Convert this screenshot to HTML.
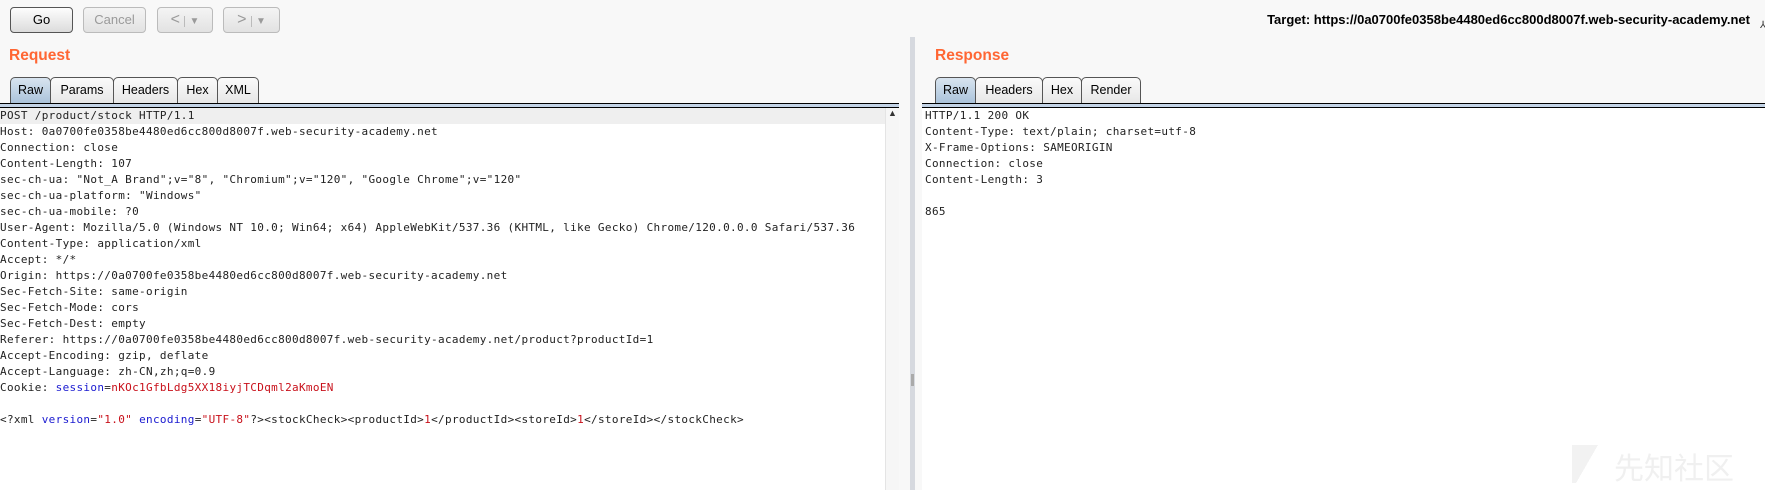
<!DOCTYPE html>
<html><head><meta charset="utf-8"><style>
*{margin:0;padding:0;box-sizing:border-box}
body{width:1765px;height:490px;background:#f8f8f8;position:relative;overflow:hidden;font-family:"Liberation Sans",Arial,sans-serif}
.btn{position:absolute;top:7px;height:26px;border:1px solid #bbb;border-radius:4px;background:linear-gradient(#f4f4f4,#e2e2e2);font-size:13px;color:#9a9a9a;text-align:center;line-height:24px}
.go{border-color:#555;color:#000;background:linear-gradient(#fdfdfd,#dcdcdc)}
.lbl{position:absolute;top:47px;font-size:15.5px;font-weight:bold;color:#ff6633}
.tab{position:absolute;top:77px;height:27px;border:1px solid #555;border-bottom:none;border-radius:5px 5px 0 0;background:linear-gradient(#fafafa,#e6e6e6);font-size:12.5px;line-height:25px;text-align:center;color:#000}
.tab.sel{background:linear-gradient(#d8e4ef,#a9c2da)}
.bar{position:absolute;top:103px;height:5px;border-top:1px solid #000;border-bottom:1px solid #000;background:#c3d3e6}
.txt{position:absolute;top:108px;background:#fff;font-family:"DejaVu Sans Mono","Liberation Mono",monospace;font-size:11px;letter-spacing:0.33px;line-height:16px;color:#222;white-space:pre}
.hl{background:#efefef}
.b{color:#1a1ad0}.r{color:#c8101a}
</style></head><body>
<div class="btn go" style="left:10px;width:63px">Go</div>
<div class="btn" style="left:83px;width:63px">Cancel</div>
<div class="btn" style="left:157px;width:56px;font-size:16px">&lt; <span style="font-size:10px;border-left:1px solid #bbb;padding-left:4px">▼</span></div>
<div class="btn" style="left:223px;width:57px;font-size:16px">&gt; <span style="font-size:10px;border-left:1px solid #bbb;padding-left:4px">▼</span></div>
<div style="position:absolute;right:15px;top:12px;font-size:13px;font-weight:bold;color:#000">Target: https://0a0700fe0358be4480ed6cc800d8007f.web-security-academy.net</div>
<div style="position:absolute;left:1760px;top:20px;font-size:10px;color:#333">⅄</div>

<div class="lbl" style="left:9px">Request</div>
<div class="tab sel" style="left:10px;width:41px">Raw</div>
<div class="tab" style="left:50px;width:64px">Params</div>
<div class="tab" style="left:113px;width:65px">Headers</div>
<div class="tab" style="left:177px;width:41px">Hex</div>
<div class="tab" style="left:217px;width:42px">XML</div>
<div class="bar" style="left:0;width:899px"></div>
<div class="txt" style="left:0;width:885px;height:382px;overflow:hidden"><div class="hl">POST /product/stock HTTP/1.1</div>Host: 0a0700fe0358be4480ed6cc800d8007f.web-security-academy.net
Connection: close
Content-Length: 107
sec-ch-ua: "Not_A Brand";v="8", "Chromium";v="120", "Google Chrome";v="120"
sec-ch-ua-platform: "Windows"
sec-ch-ua-mobile: ?0
User-Agent: Mozilla/5.0 (Windows NT 10.0; Win64; x64) AppleWebKit/537.36 (KHTML, like Gecko) Chrome/120.0.0.0 Safari/537.36
Content-Type: application/xml
Accept: */*
Origin: https://0a0700fe0358be4480ed6cc800d8007f.web-security-academy.net
Sec-Fetch-Site: same-origin
Sec-Fetch-Mode: cors
Sec-Fetch-Dest: empty
Referer: https://0a0700fe0358be4480ed6cc800d8007f.web-security-academy.net/product?productId=1
Accept-Encoding: gzip, deflate
Accept-Language: zh-CN,zh;q=0.9
Cookie: <span class="b">session</span>=<span class="r">nKOc1GfbLdg5XX18iyjTCDqml2aKmoEN</span>

&lt;?xml <span class="b">version</span>=<span class="r">"1.0"</span> <span class="b">encoding</span>=<span class="r">"UTF-8"</span>?&gt;&lt;stockCheck&gt;&lt;productId&gt;<span class="r">1</span>&lt;/productId&gt;&lt;storeId&gt;<span class="r">1</span>&lt;/storeId&gt;&lt;/stockCheck&gt;</div>
<div style="position:absolute;left:885px;top:108px;width:14px;height:382px;background:#f6f6f6;border-left:1px solid #e4e4e4"></div>
<div style="position:absolute;left:886px;top:108px;width:13px;height:14px;font-size:9px;text-align:center;color:#333">▲</div>

<div style="position:absolute;left:910px;top:37px;width:5px;height:453px;background:#d6d9df"></div>
<div style="position:absolute;left:911px;top:374px;width:3px;height:12px;background:#aaa"></div>

<div class="lbl" style="left:935px">Response</div>
<div class="tab sel" style="left:935px;width:41px">Raw</div>
<div class="tab" style="left:975px;width:68px">Headers</div>
<div class="tab" style="left:1042px;width:40px">Hex</div>
<div class="tab" style="left:1081px;width:60px">Render</div>
<div class="bar" style="left:922px;width:843px"></div>
<div class="txt" style="left:922px;width:843px;height:382px;padding-left:3px">HTTP/1.1 200 OK
Content-Type: text/plain; charset=utf-8
X-Frame-Options: SAMEORIGIN
Connection: close
Content-Length: 3

865</div>
<div style="position:absolute;left:1572px;top:445px;width:30px;height:38px;background:linear-gradient(120deg,#f2f2f2 50%,transparent 50%)"></div>
<div style="position:absolute;left:1614px;top:448px;font-family:'Noto Sans CJK SC',sans-serif;font-size:30px;color:#f0f0f0;line-height:36px">先知社区</div>
</body></html>
